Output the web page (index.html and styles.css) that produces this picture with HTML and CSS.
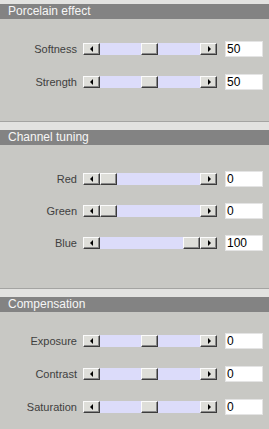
FILE: index.html
```html
<!DOCTYPE html>
<html>

<head>
    <meta charset="utf-8">
    <link rel="stylesheet" href="styles.css">
    <title>Porcelain effect</title>
</head>

<body>
    <div class="panel">
        <section class="group first">
            <div class="group-title">Porcelain effect</div>
            <div class="group-body porcelain">
                <div class="row">
                    <span class="label">Softness</span>
                    <div class="scrollbar">
                        <span class="btn"><i class="arrow left"></i></span>
                        <span class="track"><span class="thumb" style="margin-left: 41px"></span></span>
                        <span class="btn"><i class="arrow right"></i></span>
                    </div>
                    <span class="value">50</span>
                </div>
                <div class="row">
                    <span class="label">Strength</span>
                    <div class="scrollbar">
                        <span class="btn"><i class="arrow left"></i></span>
                        <span class="track"><span class="thumb" style="margin-left: 41px"></span></span>
                        <span class="btn"><i class="arrow right"></i></span>
                    </div>
                    <span class="value">50</span>
                </div>
            </div>
        </section>

        <section class="group">
            <div class="group-title">Channel tuning</div>
            <div class="group-body channel">
                <div class="row">
                    <span class="label">Red</span>
                    <div class="scrollbar">
                        <span class="btn"><i class="arrow left"></i></span>
                        <span class="track"><span class="thumb" style="margin-left: 0px"></span></span>
                        <span class="btn"><i class="arrow right"></i></span>
                    </div>
                    <span class="value">0</span>
                </div>
                <div class="row">
                    <span class="label">Green</span>
                    <div class="scrollbar">
                        <span class="btn"><i class="arrow left"></i></span>
                        <span class="track"><span class="thumb" style="margin-left: 0px"></span></span>
                        <span class="btn"><i class="arrow right"></i></span>
                    </div>
                    <span class="value">0</span>
                </div>
                <div class="row">
                    <span class="label">Blue</span>
                    <div class="scrollbar">
                        <span class="btn"><i class="arrow left"></i></span>
                        <span class="track"><span class="thumb" style="margin-left: 83px"></span></span>
                        <span class="btn"><i class="arrow right"></i></span>
                    </div>
                    <span class="value">100</span>
                </div>
            </div>
        </section>

        <section class="group">
            <div class="group-title">Compensation</div>
            <div class="group-body compensation">
                <div class="row">
                    <span class="label">Exposure</span>
                    <div class="scrollbar">
                        <span class="btn"><i class="arrow left"></i></span>
                        <span class="track"><span class="thumb" style="margin-left: 41px"></span></span>
                        <span class="btn"><i class="arrow right"></i></span>
                    </div>
                    <span class="value">0</span>
                </div>
                <div class="row">
                    <span class="label">Contrast</span>
                    <div class="scrollbar">
                        <span class="btn"><i class="arrow left"></i></span>
                        <span class="track"><span class="thumb" style="margin-left: 41px"></span></span>
                        <span class="btn"><i class="arrow right"></i></span>
                    </div>
                    <span class="value">0</span>
                </div>
                <div class="row">
                    <span class="label">Saturation</span>
                    <div class="scrollbar">
                        <span class="btn"><i class="arrow left"></i></span>
                        <span class="track"><span class="thumb" style="margin-left: 41px"></span></span>
                        <span class="btn"><i class="arrow right"></i></span>
                    </div>
                    <span class="value">0</span>
                </div>
            </div>
        </section>
    </div>
</body>

</html>
```

FILE: styles.css
```css
body,
html {
    width: 100%;
    height: 100%;
}

body {
    margin: 0;
    background-color: #c8c8c4;
    font-family: "Liberation Sans", Arial, sans-serif;
    font-size: 11px;
}

.panel {
    display: flex;
    flex-direction: column;
}

.group {
    border-top: 1px solid #a4a4a2;
    padding-top: 8px;
    background-color: #e2e2e0;
}

.group.first {
    border-top: none;
    padding-top: 4px;
}

.group-title {
    height: 15px;
    line-height: 15px;
    padding-left: 8px;
    background-color: #838383;
    color: #f6f6f6;
    font-size: 12px;
}

.group-body {
    display: flex;
    flex-direction: column;
    gap: 17px;
    background-color: #c8c8c4;
    box-sizing: border-box;
}

.porcelain {
    height: 102px;
    padding-top: 22px;
}

.channel {
    height: 143px;
    padding-top: 26px;
    gap: 16px;
}

.compensation {
    height: 118px;
    padding-top: 21px;
}

.row {
    display: grid;
    grid-template-columns: 77px 134px 40px;
    column-gap: 6px;
    align-items: center;
    height: 16px;
}

.row .value {
    margin-left: 2px;
}

.label {
    text-align: right;
    color: #404040;
}

.scrollbar {
    display: flex;
    height: 12px;
}

.btn,
.thumb {
    box-sizing: border-box;
    width: 17px;
    height: 12px;
    background-color: #deded9;
    border: 1px solid;
    border-color: #fbfbfb #3c3c3c #3c3c3c #fbfbfb;
    box-shadow: inset -1px -1px #8a8a8a;
}

.btn {
    display: flex;
    align-items: center;
    justify-content: center;
}

.track {
    display: flex;
    flex: 1;
    background-color: #dcdcfa;
}

.arrow {
    width: 0;
    height: 0;
    border-top: 3px solid transparent;
    border-bottom: 3px solid transparent;
}

.arrow.left {
    border-right: 3px solid #000;
    margin-right: 1px;
}

.arrow.right {
    border-left: 3px solid #000;
    margin-left: 1px;
}

.value {
    box-sizing: border-box;
    height: 16px;
    line-height: 14px;
    padding-left: 1px;
    background-color: #fff;
    border: 1px solid #e4e4e4;
    color: #000;
    font-size: 12px;
}
```
